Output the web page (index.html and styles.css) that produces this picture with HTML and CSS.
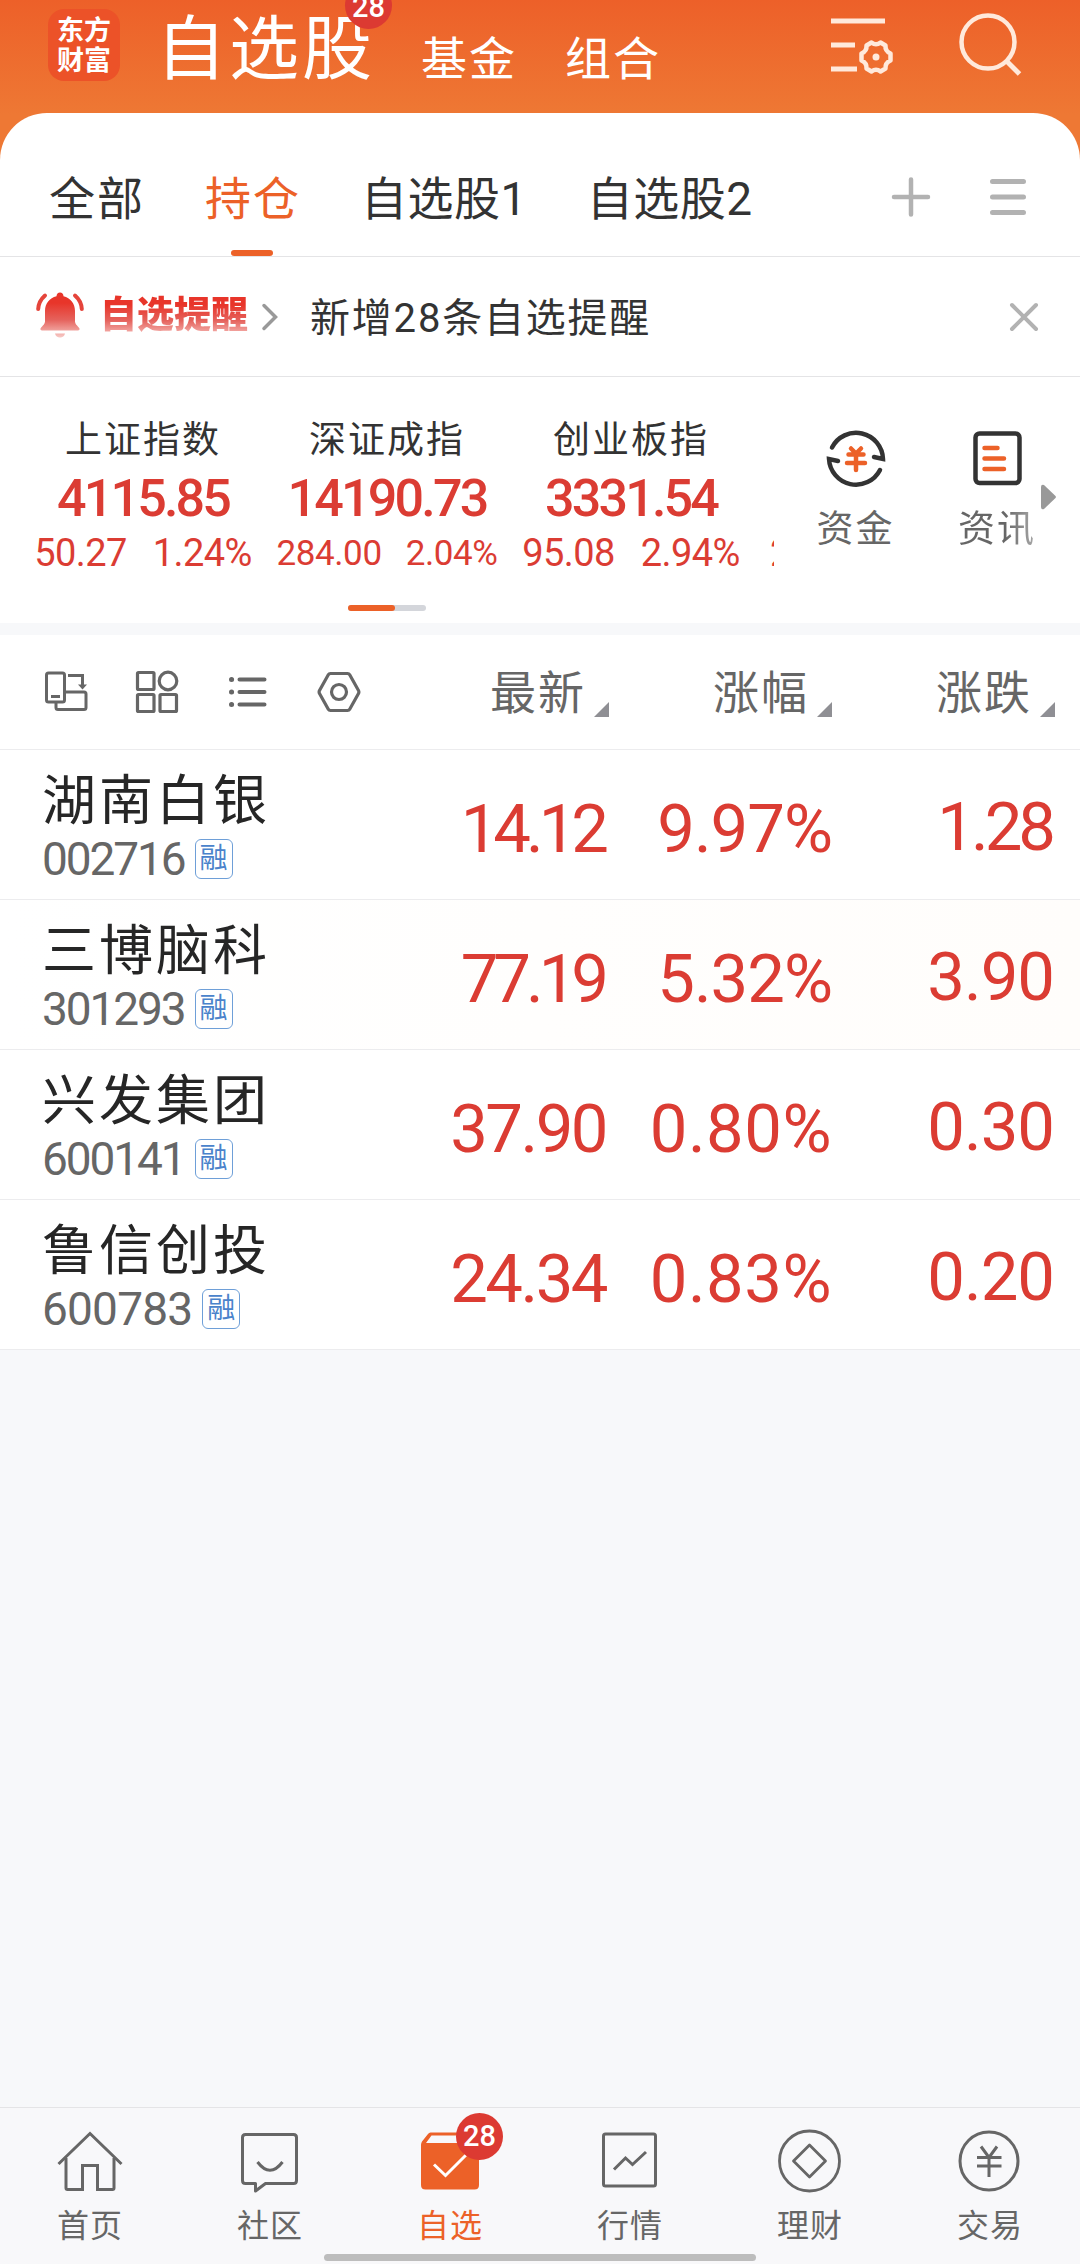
FILE: index.html
```html
<!DOCTYPE html>
<html lang="zh-CN">

<head>
    <meta charset="UTF-8">
    <title>自选股</title>
    <link rel="stylesheet" href="styles.css">
</head>

<body>
    <div class="app">
        <header class="header">
            <div class="logo">东方<br>财富</div>
            <div class="title">自选股<span class="badge">28</span></div>
            <div class="nav-link">基金</div>
            <div class="nav-link">组合</div>
            <div class="header-icons">
                <svg width="66" height="64" viewBox="0 0 66 64" fill="none" stroke="#ffe9db" stroke-width="5">
                    <path d="M1 9h54M1 33h24M1 57h26" />
                    <path d="M41.500 30.500Q46 34 50.500 30.500L55.500 33.500Q55 39 60.500 41.500V48.500Q55 51 55.500 56.500L50.500 59.500Q46 56 41.500 59.500L36.500 56.500Q37 51 31.500 48.500V41.500Q37 39 36.500 33.500z" stroke-width="4.500" stroke-linejoin="round" />
                    <circle cx="46" cy="45" r="3.500" fill="#ffe9db" stroke="none" />
                </svg>
                <svg width="66" height="66" viewBox="0 0 66 66" fill="none" stroke="#ffe9db" stroke-width="4.500">
                    <circle cx="31" cy="30" r="26.500" />
                    <path d="M49.500 49 62.500 62" stroke-width="5" />
                </svg>
            </div>
        </header>

        <main class="card">
            <nav class="tabs">
                <div class="tab">全部</div>
                <div class="tab active">持仓</div>
                <div class="tab group">自选股1</div>
                <div class="tab group">自选股2</div>
                <div class="tab-icons">
                    <svg width="40" height="40" viewBox="0 0 40 40" stroke="#b2b2b2" stroke-width="4.500" stroke-linecap="round">
                        <path d="M20 2.500v35M3 20h34" />
                    </svg>
                    <svg width="40" height="40" viewBox="0 0 40 40" stroke="#b2b2b2" stroke-width="5" stroke-linecap="round">
                        <path d="M4.500 4.500h31M4.500 20h31M4.500 35.500h31" />
                    </svg>
                </div>
            </nav>

            <section class="notice">
                <svg class="bell" width="48" height="48" viewBox="0 0 48 48">
                    <defs>
                        <linearGradient id="bell" gradientUnits="userSpaceOnUse" x1="0" y1="0" x2="0" y2="48">
                            <stop offset="0.250" stop-color="#e8352a" />
                            <stop offset="0.600" stop-color="#e5625c" />
                            <stop offset="0.950" stop-color="#f6c4c0" />
                        </linearGradient>
                    </defs>
                    <path fill="url(#bell)" d="M24 1.500c2 0 3.500 1.500 3.500 3.800C34.500 7 39 12.500 39 20v10.500c0 3 4 5.500 4.500 7 .3 1.200-.4 2-1.500 2H6c-1.100 0-1.800-.8-1.500-2C5 36 9 33.500 9 30.500V20c0-7.500 4.500-13 11.500-14.700 0-2.300 1.500-3.800 3.500-3.800zM19 42.500h10c-.5 2.500-2.500 4-5 4s-4.500-1.500-5-4z" />
                    <path fill="none" stroke="#e5443b" stroke-width="4" stroke-linecap="round" d="M9 4.500C5 8 2.500 12.500 2.200 18M39 4.500c4 3.500 6.500 8 6.800 13.500" />
                </svg>
                <span class="notice-title">自选提醒</span>
                <svg class="chevron" width="18" height="30" viewBox="0 0 18 30" fill="none" stroke="#999" stroke-width="3.500" stroke-linecap="round">
                    <path d="M3 3.500 14.500 15 3 26.500" />
                </svg>
                <span class="notice-text">新增28条自选提醒</span>
                <svg class="close" width="32" height="32" viewBox="0 0 32 32" stroke="#b2b2b2" stroke-width="4" stroke-linecap="round">
                    <path d="M4 4 28 28M28 4 4 28" />
                </svg>
            </section>

            <section class="indexes">
                <div class="index-list">
                    <div class="index">
                        <div class="index-name">上证指数</div>
                        <div class="index-value">4115.85</div>
                        <div class="index-change"><span>50.27</span><span>1.24%</span></div>
                    </div>
                    <div class="index">
                        <div class="index-name">深证成指</div>
                        <div class="index-value">14190.73</div>
                        <div class="index-change small"><span>284.00</span><span>2.04%</span></div>
                    </div>
                    <div class="index">
                        <div class="index-name">创业板指</div>
                        <div class="index-value">3331.54</div>
                        <div class="index-change"><span>95.08</span><span>2.94%</span></div>
                    </div>
                    <div class="index">
                        <div class="index-name"></div>
                        <div class="index-value"></div>
                        <div class="index-change next"><span>2</span></div>
                    </div>
                </div>
                <div class="shortcut">
                    <svg width="64" height="64" viewBox="0 0 64 64" fill="none" stroke="#333" stroke-width="4.500" stroke-linecap="round" stroke-linejoin="miter">
                        <path d="M8 21.500A27 27 0 0 1 59 33L50 31" />
                        <path d="M56 44A27 27 0 0 1 5 33L14 35" />
                        <path stroke="#ec6128" d="M27 22.500 32 27.500 37 22.500M24.500 28.500h15M23 37h18M32 28v16" />
                    </svg>
                    <span>资金</span>
                </div>
                <div class="shortcut news">
                    <svg width="64" height="64" viewBox="0 0 64 64" fill="none" stroke-linecap="round">
                        <rect x="10.500" y="7.500" width="44" height="49.500" rx="4" stroke="#333" stroke-width="4.500" />
                        <path stroke="#ec6128" stroke-width="4.500" d="M19.500 22h13M19.500 32.500h19.500M19.500 43h19.500" />
                    </svg>
                    <span class="fade">资讯</span>
                </div>
                <svg class="more" width="16" height="26" viewBox="0 0 16 26">
                    <path fill="#999" d="M0 3Q0 0 3 1L14.500 12Q15.500 13 14.500 14L3 25Q0 26 0 23z" />
                </svg>
            </section>
            <div class="pager"><i></i></div>
        </main>

        <section class="stocks">
            <div class="row stocks-head">
                <div class="tools">
                    <svg width="44" height="44" viewBox="0 0 44 44" fill="none" stroke="#666" stroke-width="3">
                        <rect x="2.500" y="3" width="18" height="29" rx="2" />
                        <path d="M7 26.500h9M12 32v5.500q0 2 2 2h26q2 0 2-2V24q0-2-2-2H21M24 5.500h14.500v12" />
                        <path d="M34 14.500h9l-4.500 5z" fill="#666" stroke="none" />
                    </svg>
                    <svg width="44" height="44" viewBox="0 0 44 44" fill="none" stroke="#666" stroke-width="3.200">
                        <rect x="2.500" y="2.500" width="16.500" height="17" rx="1" />
                        <circle cx="33" cy="11" r="8.800" />
                        <rect x="2.500" y="24.500" width="16.500" height="17" rx="1" />
                        <rect x="25" y="24.500" width="16.500" height="17" rx="1" />
                    </svg>
                    <svg width="44" height="44" viewBox="0 0 44 44" stroke="#666" stroke-width="4" stroke-linecap="round">
                        <path d="M13.500 9.500h25M13.500 22h25M13.500 34.500h25" />
                        <path stroke-width="5" d="M5.500 9.500h.1M5.500 22h.1M5.500 34.500h.1" />
                    </svg>
                    <svg width="44" height="44" viewBox="0 0 44 44" fill="none" stroke="#666" stroke-width="3.200" stroke-linejoin="round">
                        <path d="M13.500 3.500h17q1.500 0 2.200 1.300L41.500 20.500q.8 1.500 0 3L32.700 39.200q-.7 1.300-2.200 1.300h-17q-1.500 0-2.200-1.300L2.500 23.500q-.8-1.500 0-3L11.300 4.800q.7-1.300 2.200-1.300z" />
                        <circle cx="22" cy="22" r="7.500" />
                    </svg>
                </div>
                <div class="col">最新<i class="sort"></i></div>
                <div class="col">涨幅<i class="sort"></i></div>
                <div class="col">涨跌<i class="sort"></i></div>
            </div>
            <div class="row">
                <div class="stock">
                    <div class="stock-name">湖南白银</div>
                    <div class="stock-code">002716<span class="tag">融</span></div>
                </div>
                <div class="num tight">14.12</div>
                <div class="num rate">9.97%</div>
                <div class="num diff tight">1.28</div>
            </div>
            <div class="row flash">
                <div class="stock">
                    <div class="stock-name">三博脑科</div>
                    <div class="stock-code">301293<span class="tag">融</span></div>
                </div>
                <div class="num tight">77.19</div>
                <div class="num rate">5.32%</div>
                <div class="num diff">3.90</div>
            </div>
            <div class="row">
                <div class="stock">
                    <div class="stock-name">兴发集团</div>
                    <div class="stock-code">600141<span class="tag">融</span></div>
                </div>
                <div class="num">37.90</div>
                <div class="num rate wide">0.80%</div>
                <div class="num diff">0.30</div>
            </div>
            <div class="row">
                <div class="stock">
                    <div class="stock-name">鲁信创投</div>
                    <div class="stock-code wide">600783<span class="tag">融</span></div>
                </div>
                <div class="num">24.34</div>
                <div class="num rate wide">0.83%</div>
                <div class="num diff">0.20</div>
            </div>
        </section>

        <footer class="tabbar">
            <div class="tabbar-item">
                <svg width="68" height="68" viewBox="0 0 68 68" fill="none" stroke="#666" stroke-width="3">
                    <path d="M2.500 38 34 7.500 65.500 38" />
                    <path d="M10 32v30q0 1.500 1.500 1.500H26.500V39.500h15V63.500h15q1.500 0 1.500-1.500V32" />
                </svg>
                <span>首页</span>
            </div>
            <div class="tabbar-item">
                <svg width="68" height="68" viewBox="0 0 68 68" fill="none" stroke="#666" stroke-width="3" stroke-linejoin="round">
                    <path d="M9.500 8.500h48q3 0 3 3v43q0 3-3 3H29.500L19.500 65V57.500H9.500q-3 0-3-3v-43q0-3 3-3z" />
                    <path d="M21.500 36q12.500 16.500 25 0" />
                </svg>
                <span>社区</span>
            </div>
            <div class="tabbar-item active">
                <svg width="68" height="68" viewBox="0 0 68 68">
                    <path fill="#ec6128" d="M14.500 6.500H54q1.500 0 2.500 1l5.500 9q1 1.500 1 3V59q0 4.500-4.500 4.500H9.500Q5 63.500 5 59V19q0-2 1-3.500l6-7.500q1-1.500 2.500-1.500z" />
                    <path fill="#f8f8fa" d="M15.500 9.500H53l5 7.500H10z" />
                    <path fill="none" stroke="#fff" stroke-width="3" d="M18 38.500 29.500 49.500 50 29" />
                </svg>
                <span>自选</span>
                <b class="badge">28</b>
            </div>
            <div class="tabbar-item">
                <svg width="68" height="68" viewBox="0 0 68 68" fill="none" stroke="#666" stroke-width="3">
                    <rect x="7.500" y="8" width="52" height="52" rx="2" />
                    <path d="M18 43.500 29.500 32 36.500 38.500 50 26" />
                </svg>
                <span>行情</span>
            </div>
            <div class="tabbar-item">
                <svg width="68" height="68" viewBox="0 0 68 68" fill="none" stroke="#666" stroke-width="2.800" stroke-linejoin="round">
                    <circle cx="33.500" cy="35" r="30" />
                    <path d="M33.500 19 49.500 35 33.500 51 17.500 35z" />
                </svg>
                <span>理财</span>
            </div>
            <div class="tabbar-item">
                <svg width="68" height="68" viewBox="0 0 68 68" fill="none" stroke="#666" stroke-width="3">
                    <circle cx="33" cy="35" r="29" />
                    <path d="M25 20.500 33 31.500 41 20.500M21 31.500h24.500M21 40h24.500M33 31v20" />
                </svg>
                <span>交易</span>
            </div>
            <div class="home-indicator"></div>
        </footer>
    </div>
</body>

</html>
```
FILE: styles.css
```css
* {
    box-sizing: border-box;
}

body {
    margin: 0;
    font-family: Roboto, "Noto Sans CJK SC", sans-serif;
    background: #f7f8fa;
    color: #333;
}

svg {
    display: block;
    flex: none;
}

.app {
    width: 1080px;
    height: 2264px;
    display: flex;
    flex-direction: column;
    overflow: hidden;
}

/* 顶部 */
.header {
    height: 160px;
    flex: none;
    display: flex;
    align-items: flex-start;
    padding: 0 57px 0 48px;
    background: linear-gradient(#ed6029, #ee7834 115px);
    color: #fff;
    white-space: nowrap;
}

.logo {
    width: 72px;
    height: 72px;
    margin-top: 9px;
    padding-top: 5px;
    border-radius: 16px;
    background: #ec5228;
    font-family: "Noto Sans CJK SC", sans-serif;
    font-size: 27px;
    font-weight: 700;
    line-height: 30px;
    text-align: center;
}

.title {
    position: relative;
    margin-left: 36px;
    width: 217px;
    font-size: 70px;
    letter-spacing: 3px;
    line-height: 101px;
}

.badge {
    position: absolute;
    width: 47px;
    height: 47px;
    border-radius: 50%;
    background: #dc3a32;
    color: #fff;
    font-size: 29px;
    font-weight: 500;
    line-height: 47px;
    letter-spacing: 0;
    text-align: center;
}

.title .badge {
    left: 189px;
    top: -18px;
    line-height: 50px;
}

.nav-link {
    margin-left: 48px;
    width: 96px;
    font-size: 46px;
    letter-spacing: 2px;
    line-height: 118px;
}

.header-icons {
    display: flex;
    gap: 61px;
    margin-left: auto;
    padding-top: 12px;
}

/* 分组标签 */
.card {
    height: 510px;
    flex: none;
    margin-top: -47px;
    border-radius: 47px 47px 0 0;
    background: #fff;
}

.tabs {
    display: flex;
    height: 144px;
    padding: 26px 52px 0 49px;
    border-bottom: 1px solid #e4e4e6;
}

.tab {
    display: flex;
    flex-direction: column;
    align-items: center;
    margin-right: 60px;
    font-size: 46px;
    letter-spacing: 2px;
    line-height: 120px;
    white-space: nowrap;
}

.tab.group {
    letter-spacing: 0.5px;
}

.tab.active {
    color: #ec6128;
}

.tab.active::after {
    content: "";
    width: 42px;
    height: 6px;
    margin: -9px 2px 0 0;
    border-radius: 3px;
    background: #ec6128;
}

.tab-icons {
    display: flex;
    gap: 57px;
    margin-left: auto;
    padding-top: 38px;
}

/* 提醒 */
.notice {
    display: flex;
    align-items: center;
    height: 120px;
    padding: 0 40px 0 36px;
    border-bottom: 1px solid #e4e4e6;
    white-space: nowrap;
}

.bell {
    margin-top: -4px;
}

.notice-title {
    margin: -2px 0 0 16px;
    width: 148px;
    font-size: 37px;
    font-weight: 900;
    line-height: 44px;
    background: linear-gradient(#e8352a 25%, #e5625c 60%, #f3aaa6 88%);
    -webkit-background-clip: text;
    background-clip: text;
    color: transparent;
}

.chevron {
    margin-left: 13px;
}

.notice-text {
    margin: -4px 0 0 31px;
    font-size: 40px;
    letter-spacing: 1.8px;
}

.close {
    margin-left: auto;
}

/* 指数 */
.indexes {
    display: flex;
    height: 210px;
    padding-left: 21px;
}

.index-list {
    display: flex;
    width: 753px;
    flex: none;
    overflow: hidden;
    padding-top: 36px;
}

.index {
    width: 244px;
    flex: none;
    text-align: center;
    white-space: nowrap;
}

.index-name {
    height: 56px;
    font-size: 37px;
    letter-spacing: 2px;
    line-height: 56px;
}

.index-value {
    height: 60px;
    color: #db3c33;
    font-size: 52px;
    font-weight: 500;
    letter-spacing: -2.8px;
    line-height: 60px;
}

.index-change {
    display: flex;
    justify-content: center;
    gap: 26px;
    height: 48px;
    color: #db3c33;
    font-size: 38px;
    letter-spacing: -0.6px;
    line-height: 48px;
}

.index-change.small {
    gap: 24px;
    font-size: 35px;
    letter-spacing: -0.4px;
    line-height: 50px;
}

.index-change.next {
    justify-content: flex-start;
    padding-left: 17px;
}

.shortcut {
    display: flex;
    flex-direction: column;
    align-items: center;
    width: 141px;
    margin-left: 11px;
    padding-top: 49px;
    color: #666;
    font-size: 37px;
    letter-spacing: 2px;
    line-height: 50px;
    white-space: nowrap;
}

.shortcut span {
    margin-top: 15px;
}

.shortcut.news {
    width: 90px;
    margin-left: 26px;
}

.fade {
    background: linear-gradient(90deg, #666 60%, #aaa);
    -webkit-background-clip: text;
    background-clip: text;
    color: transparent;
}

.more {
    margin-top: 107px;
    margin-left: -1px;
}

.pager {
    width: 78px;
    height: 6px;
    margin: 18px 0 0 348px;
    border-radius: 3px;
    background: #d4d6db;
}

.pager i {
    display: block;
    width: 47px;
    height: 6px;
    border-radius: 3px;
    background: #ec6128;
}

/* 自选列表 */
.stocks {
    flex: none;
    margin-top: 12px;
    background: #fff;
}

.row {
    display: grid;
    grid-template-columns: 383px 223px 224px 222px;
    height: 150px;
    border-bottom: 1px solid #ececee;
    white-space: nowrap;
}

.row.stocks-head {
    grid-template-columns: 386px 223px 223px 223px;
    height: 115px;
    color: #666;
}

.row.flash {
    background: linear-gradient(90deg, #fff, #fffdfb);
}

.tools {
    display: flex;
    gap: 47px;
    padding: 35px 0 0 44px;
}

.col {
    display: flex;
    justify-content: flex-end;
    font-size: 46px;
    letter-spacing: 2px;
    line-height: 116px;
}

.sort {
    width: 15px;
    height: 15px;
    margin: 67px 0 0 8px;
    background: #8f8f94;
    clip-path: polygon(100% 0, 100% 100%, 0 100%);
}

.stock {
    padding: 16px 0 0 42px;
}

.stock-name {
    height: 71px;
    color: #262626;
    font-size: 54px;
    letter-spacing: 3px;
    line-height: 72px;
}

.stock-code {
    display: flex;
    align-items: center;
    gap: 10px;
    color: #666;
    font-size: 46px;
    letter-spacing: -2.1px;
    line-height: 44px;
}

.stock-code.wide {
    letter-spacing: -0.8px;
}

.tag {
    width: 38px;
    height: 40px;
    border: 1.5px solid #6e9fd8;
    border-radius: 6px;
    color: #4a83cb;
    font-size: 28px;
    letter-spacing: 0;
    line-height: 38px;
    text-align: center;
}

.num {
    color: #db3c33;
    font-size: 67px;
    letter-spacing: -2.5px;
    line-height: 158px;
    text-align: right;
}

.num.tight {
    padding-right: 2px;
    letter-spacing: -5px;
}

.num.rate {
    margin-right: -2px;
    letter-spacing: -1px;
}

.num.rate.wide {
    letter-spacing: 0.5px;
}

.num.diff {
    letter-spacing: -1px;
    margin-right: -2px;
    line-height: 155px;
}

.num.diff.tight {
    letter-spacing: -4px;
}

/* 底部导航 */
.tabbar {
    position: relative;
    display: flex;
    height: 157px;
    margin-top: auto;
    border-top: 1px solid #e4e4e6;
    background: #f8f8fa;
}

.tabbar-item {
    position: relative;
    display: flex;
    flex-direction: column;
    align-items: center;
    width: 180px;
    padding-top: 18px;
    color: #666;
    font-size: 32px;
    letter-spacing: 1px;
    line-height: 40px;
}

.tabbar-item span {
    margin-top: 12px;
}

.tabbar-item.active {
    color: #ec6128;
}

.tabbar-item .badge {
    left: 96px;
    top: 5px;
}

.home-indicator {
    position: absolute;
    left: 324px;
    bottom: 3px;
    width: 432px;
    height: 7px;
    border-radius: 4px;
    background: #bdbdbd;
}
```
